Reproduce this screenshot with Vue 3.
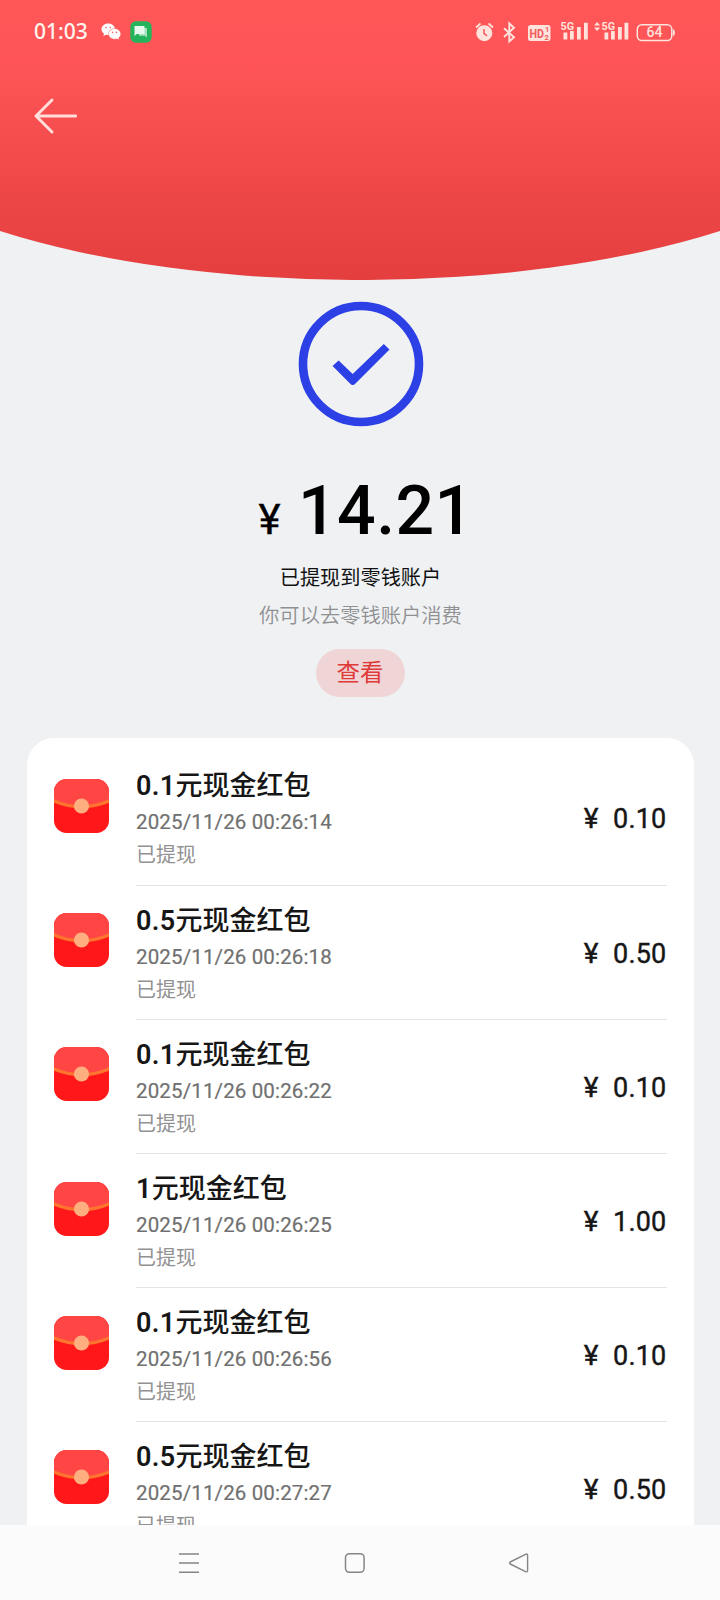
<script setup>
const records = [
  { label: '0.1', time: '00:26:14', amount: '0.10' },
  { label: '0.5', time: '00:26:18', amount: '0.50' },
  { label: '0.1', time: '00:26:22', amount: '0.10' },
  { label: '1', time: '00:26:25', amount: '1.00' },
  { label: '0.1', time: '00:26:56', amount: '0.10' },
  { label: '0.5', time: '00:27:27', amount: '0.50' },
]
</script>

<template>
  <div class="screen">
    <header class="hero">
      <svg class="hero-bg" width="720" height="280" viewBox="0 0 720 280">
        <defs>
          <linearGradient id="red" x1="0" y1="0" x2="0" y2="1">
            <stop offset="0" stop-color="#ff5658" />
            <stop offset="0.22" stop-color="#ff5558" />
            <stop offset="0.5" stop-color="#f54c4d" />
            <stop offset="0.8" stop-color="#eb4445" />
            <stop offset="1" stop-color="#e43e3f" />
          </linearGradient>
        </defs>
        <path d="M0 0H720V231A540 192.5 0 0 1 0 231Z" fill="url(#red)" />
      </svg>
      <div class="status">
        <span class="clock">01:03</span>
        <svg class="wechat" width="20" height="18" viewBox="0 0 20 18">
          <path d="M7.2 .5C3.4.5.5 3 .5 6.300c0 1.900 1 3.400 2.500 4.500L2.400 13l2.500-1.300c.8.2 1.500.3 2.300.3C11 12 14 9.500 14 6.300S11 .5 7.200.5Z" fill="#fff" />
          <ellipse cx="13.600" cy="10.900" rx="6.300" ry="5.600" fill="#ff8a8a" />
          <path d="M13.600 6c3.200 0 5.800 2.200 5.800 4.900 0 1.500-.8 2.800-2 3.700l.5 1.800-2.100-1c-.7.2-1.500.3-2.200.3-3.200 0-5.700-2.100-5.700-4.800S10.400 6 13.600 6Z" fill="#fff" />
          <g fill="#e86a6b"><circle cx="5" cy="4.600" r=".8" /><circle cx="9.400" cy="4.600" r=".8" /><circle cx="11.600" cy="9.400" r=".8" /><circle cx="15.500" cy="9.400" r=".8" /></g>
        </svg>
        <svg class="chat" width="22" height="22" viewBox="0 0 22 22">
          <rect x=".3" y=".3" width="21.400" height="21.400" rx="5.500" fill="#25b35c" />
          <path d="M9 7h8v9.500l-2.200-1.800H9Z" fill="#a5e2bd" />
          <path d="M4.500 5h10v8H6.800L4.500 14.900Z" fill="#e5faec" />
        </svg>
        <div class="tray">
          <svg width="200" height="24" viewBox="0 0 200 24" fill="none" stroke="#ffe3dc">
            <circle cx="9.300" cy="13.200" r="8" fill="#ffe3dc" stroke="none" />
            <path d="M1 7.500 5.500 3.500M13.500 3.500 18 7.500" stroke-width="1.800" />
            <path d="M9 9v4.500l3 2.300" stroke="#f56264" stroke-width="1.600" />
            <path d="M29 8.200 39 17.300 34.300 21.500V3.500L39 7.800 29 17" stroke-width="1.900" />
            <rect x="53" y="5" width="22.500" height="16" rx="2.500" fill="#ffe3dc" stroke="none" />
            <g fill="#ffe3dc" stroke="none">
              <path d="M88.500 12.500h3.800v7h-3.800zM95 11h3.800v8.500h-3.800zM102 7h3.800v12.500h-3.800zM109 2.800h3.800v16.700h-3.800zM129.500 12.500h3.800v7h-3.800zM136 11h3.800v8.500h-3.800zM143 7h3.800v12.500h-3.800zM149.500 2.800h3.800v16.700h-3.800z" />
              <path d="m119 5.500 3.100-3.500 3.100 3.500ZM119 7.500h6.200l-3.100 3.500Z" />
              <path d="M198 9q2 .5 2 3.500t-2 3.500Z" />
            </g>
            <rect x="162.300" y="4.700" width="34.500" height="15.800" rx="4.500" stroke-width="1.500" />
            <g fill="#ffe3dc" stroke="none" font-family="Roboto, sans-serif" font-weight="700">
              <text x="85.500" y="10" font-size="11" textLength="13.500" lengthAdjust="spacingAndGlyphs" stroke="#ff5558" stroke-width="1.500" paint-order="stroke">5G</text>
              <text x="126.500" y="10" font-size="11" textLength="13.500" lengthAdjust="spacingAndGlyphs" stroke="#ff5558" stroke-width="1.500" paint-order="stroke">5G</text>
              <text x="179.500" y="17.400" font-size="14" font-weight="500" text-anchor="middle">64</text>
              <g fill="#f25b5d"><text x="54.500" y="17.500" font-size="12.500" textLength="14.500" lengthAdjust="spacingAndGlyphs">HD</text><text x="70" y="12.300" font-size="7.500">1</text><text x="69.500" y="19.600" font-size="7.500">2</text></g>
            </g>
          </svg>
        </div>
      </div>
      <svg class="back" width="46" height="38" viewBox="0 0 46 38" fill="none" stroke="#ffdedb" stroke-width="2.900" stroke-linecap="round" stroke-linejoin="round">
        <path d="M42.700 19H3M19 3 3 19l16 16" />
      </svg>
    </header>

    <section class="result">
      <svg class="tick" width="126" height="126" viewBox="0 0 126 126">
        <circle cx="63" cy="63" r="58" fill="none" stroke="#2d40e5" stroke-width="8.600" />
        <path d="M34.600 65 40.600 59.500 54.700 73 85.800 43 91.500 48.500 57.500 82.500Q54.700 85.500 52 82.500Z" fill="#2d40e5" />
      </svg>
      <div class="total"><span class="yen">¥</span><span class="sum">14.21</span></div>
      <p class="done">已提现到零钱账户</p>
      <p class="hint">你可以去零钱账户消费</p>
      <button class="view">查看</button>
    </section>

    <main class="list">
      <article v-for="r in records" :key="r.time" class="row">
        <svg class="packet" width="55" height="54" viewBox="0 0 55 54">
          <defs><clipPath id="tile"><rect width="55" height="54" rx="12.500" /></clipPath></defs>
          <g clip-path="url(#tile)">
            <rect width="55" height="54" fill="#ff1719" />
            <path d="M0 0H55V22Q27.500 35 0 22Z" fill="#ff4645" />
            <path d="M-1 21.500Q27.500 34 56 21.500" fill="none" stroke="#ff742f" stroke-width="3.200" />
            <circle cx="27.500" cy="27" r="7.600" fill="#ffae80" />
          </g>
        </svg>
        <div class="body">
          <div class="info">
            <h2 class="name"><b>{{ r.label }}</b>元现金红包</h2>
            <p class="date">2025/11/26 {{ r.time }}</p>
            <p class="state">已提现</p>
          </div>
          <div class="amount"><span class="cur">¥</span><span>{{ r.amount }}</span></div>
        </div>
      </article>
    </main>

    <nav class="nav">
      <svg width="22" height="22" viewBox="0 0 22 22" stroke="#858585" stroke-width="1.600"><path d="M1 2H21M1 11H21M1 20.200H21" /></svg>
      <svg width="22" height="22" viewBox="0 0 22 22" fill="none" stroke="#858585" stroke-width="1.500"><rect x="2.500" y="1.700" width="18.600" height="18.600" rx="4" /></svg>
      <svg width="22" height="22" viewBox="0 0 22 22" fill="none" stroke="#858585" stroke-width="1.400" stroke-linejoin="round"><path d="M2.200 10Q1 11 2.200 12L17.500 19.700Q19.600 20.300 19.600 18.500V3.500Q19.600 1.500 17.500 2.300Z" /></svg>
    </nav>
  </div>
</template>

<style>
body { margin: 0; background: #eff1f3; }
</style>

<style scoped>
.screen { position: relative; width: 720px; height: 1600px; overflow: hidden; background: #eff1f3; font-family: Roboto, "Noto Sans CJK SC", sans-serif; }
p, h2 { margin: 0; }
svg { display: block; flex: none; }
.hero { position: relative; height: 280px; }
.hero-bg { position: absolute; inset: 0; }
.status { position: relative; display: flex; align-items: center; height: 64px; padding: 0 45px 0 34px; }
.clock { width: 67px; margin-top: -2px; color: #fff5ee; font-family: "Noto Sans", Roboto, sans-serif; font-size: 21px; font-weight: 500; letter-spacing: 0; }
.chat { margin-left: 8.500px; }
.tray { margin-left: auto; }
.back { position: relative; margin: 33px 0 0 33px; }
.result { display: flex; flex-direction: column; align-items: center; height: 458px; }
.tick { margin: 21px 0 0 2px; }
.total { display: flex; align-items: baseline; height: 80px; margin: 44px 0 0 12px; line-height: 80px; color: #000; font-weight: 500; }
.yen { font-size: 42px; margin-right: 17.500px; font-weight: 400; -webkit-text-stroke: .4px #000; }
.sum { font-size: 68px; letter-spacing: .4px; }
.done { margin: 12px 0 0 1px; height: 30px; line-height: 30px; font-size: 20.200px; color: #111; }
.hint { margin: 8px 0 0 1px; height: 30px; line-height: 30px; font-size: 20.300px; font-weight: 350; color: #8f9092; }
.view { width: 89px; height: 48px; margin-top: 18px; padding: 1px 0 0; border: 0; border-radius: 24px; background: #f0d5d7; color: #e03a38; font: 400 23.400px/47px Roboto, "Noto Sans CJK SC", sans-serif; }
.list { height: 900px; margin: 0 26px 0 27px; padding: 13px 27px 0; border-radius: 27px 27px 0 0; background: #fff; box-sizing: border-box; }
.row { display: flex; height: 134.200px; }
.packet { margin: 28px 27px 0 0; }
.body { display: flex; flex: 1; justify-content: space-between; height: 134.700px; box-sizing: border-box; border-bottom: 1px solid #e4e4e4; }
.name { height: 36px; margin-top: 17.400px; line-height: 36px; font-size: 27px; font-weight: 500; color: #161616; }
.name b { font-weight: 600; letter-spacing: .3px; }
.date { height: 26px; margin-top: 5px; line-height: 26px; font-size: 20.500px; letter-spacing: .14px; color: #707070; -webkit-text-stroke: .2px #707070; }
.state { height: 28px; margin: 6px 0 0; line-height: 28px; font-size: 20px; color: #929292; }
.amount { display: flex; height: 36px; margin: 50.400px .5px 0 0; line-height: 36px; font-size: 27px; letter-spacing: .2px; color: #161616; -webkit-text-stroke: .4px #161616; }
.cur { margin-right: 14.500px; font-size: 28px; }
.nav { position: absolute; left: 0; right: 0; bottom: 0; display: flex; gap: 143px; height: 75px; padding-left: 178px; align-items: center; background: #fbfbfb; box-sizing: border-box; }
</style>
